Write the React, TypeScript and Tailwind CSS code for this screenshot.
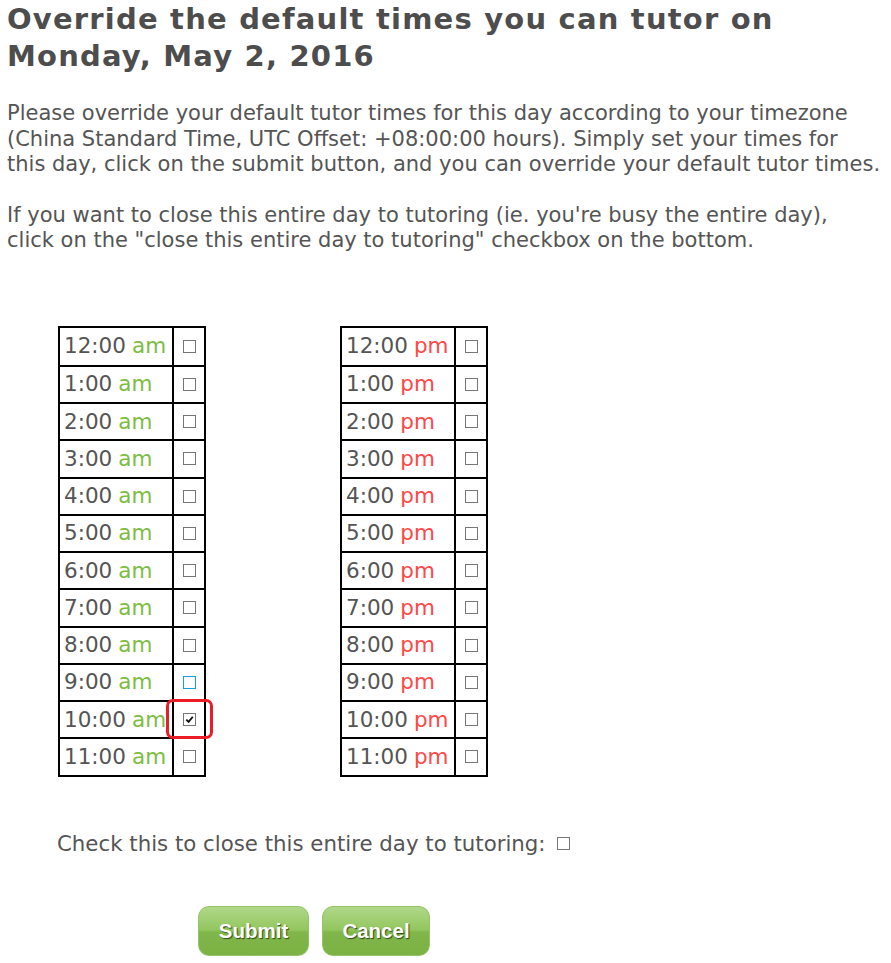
const hours = ["12:00", "1:00", "2:00", "3:00", "4:00", "5:00", "6:00", "7:00", "8:00", "9:00", "10:00", "11:00"];

type BoxState = "off" | "hover" | "on";

const Box = ({ state }: { state: BoxState }) => (
	<span
		className={
			"flex h-[13px] w-[13px] items-center justify-center border bg-white " +
			(state === "hover" ? "border-[#1e9be0]" : "border-[#767676]")
		}
	>
		{state === "on" && (
			<svg viewBox="0 0 12 12" className="h-[11px] w-[11px]">
				<path d="M2.5 6.2 L5 8.6 L9.6 3" fill="none" stroke="#111" strokeWidth="2" />
			</svg>
		)}
	</span>
);

const TimeTable = ({ suffix }: { suffix: "am" | "pm" }) => (
	<div className="flex w-[148px] flex-col border-2 border-black">
		{hours.map((h, i) => {
			const state: BoxState =
				suffix === "am" && i === 9 ? "hover" : suffix === "am" && i === 10 ? "on" : "off";
			return (
				<div key={h} className={"flex h-[37.25px] " + (i > 0 ? "border-t-2 border-black" : "")}>
					<div className="flex w-[114px] items-center border-r-2 border-black pl-[4px] text-[21.5px] text-[#555]">
						{h}
						<span className={"ml-[6px] " + (suffix === "am" ? "text-[#7cbd42]" : "text-[#ff4747]")}>{suffix}</span>
					</div>
					<div className="relative flex flex-1 items-center justify-center">
						<Box state={state} />
						{state === "on" && (
							<span className="absolute -top-[3px] -bottom-[2px] -left-[8px] -right-[9px] rounded-[7px] border-[3px] border-[#ec1c24]" />
						)}
					</div>
				</div>
			);
		})}
	</div>
);

const GreenButton = ({ label, w }: { label: string; w: string }) => (
	<button
		className={
			"relative h-[50px] overflow-hidden rounded-[11px] border border-[#93c46a] bg-[linear-gradient(#b0d889,#92c65d_48%,#80b64a_52%,#7cb244)] text-[20.5px] font-bold text-white [font-family:'Liberation_Sans',Arial,sans-serif] [text-shadow:1px_1px_1px_#2f4a17] " +
			w
		}
	>
		{label}
	</button>
);

export default function App() {
	return (
		<div className="min-h-[963px] w-[891px] overflow-hidden bg-white pl-[7px] text-[#555] [font-family:'DejaVu_Sans',Verdana,sans-serif]">
			<h1 className="pt-[1px] text-[29px] leading-[37px] font-bold tracking-[1.2px] text-[#4d4d4d]">
				Override the default times you can tutor on Monday, May 2, 2016
			</h1>
			<div className="mr-[-6px] text-[21px] leading-[25.5px] whitespace-nowrap">
				<p className="mt-[26px]">
					Please override your default tutor times for this day according to your timezone
					<br />
					(China Standard Time, UTC Offset: +08:00:00 hours). Simply set your times for
					<br />
					this day, click on the submit button, and you can override your default tutor times.
				</p>
				<p className="mt-[25px]">
					If you want to close this entire day to tutoring (ie. you're busy the entire day),
					<br />
					click on the "close this entire day to tutoring" checkbox on the bottom.
				</p>
			</div>
			<div className="mt-[72px] ml-[51px] flex gap-[134px]">
				<TimeTable suffix="am" />
				<TimeTable suffix="pm" />
			</div>
			<div className="mt-[51px] ml-[50px] flex items-center text-[21.3px]">
				Check this to close this entire day to tutoring:
				<span className="ml-[11px]">
					<Box state="off" />
				</span>
			</div>
			<div className="mt-[47px] ml-[191px] flex gap-[13px]">
				<GreenButton label="Submit" w="w-[111px]" />
				<GreenButton label="Cancel" w="w-[108px]" />
			</div>
		</div>
	);
}
